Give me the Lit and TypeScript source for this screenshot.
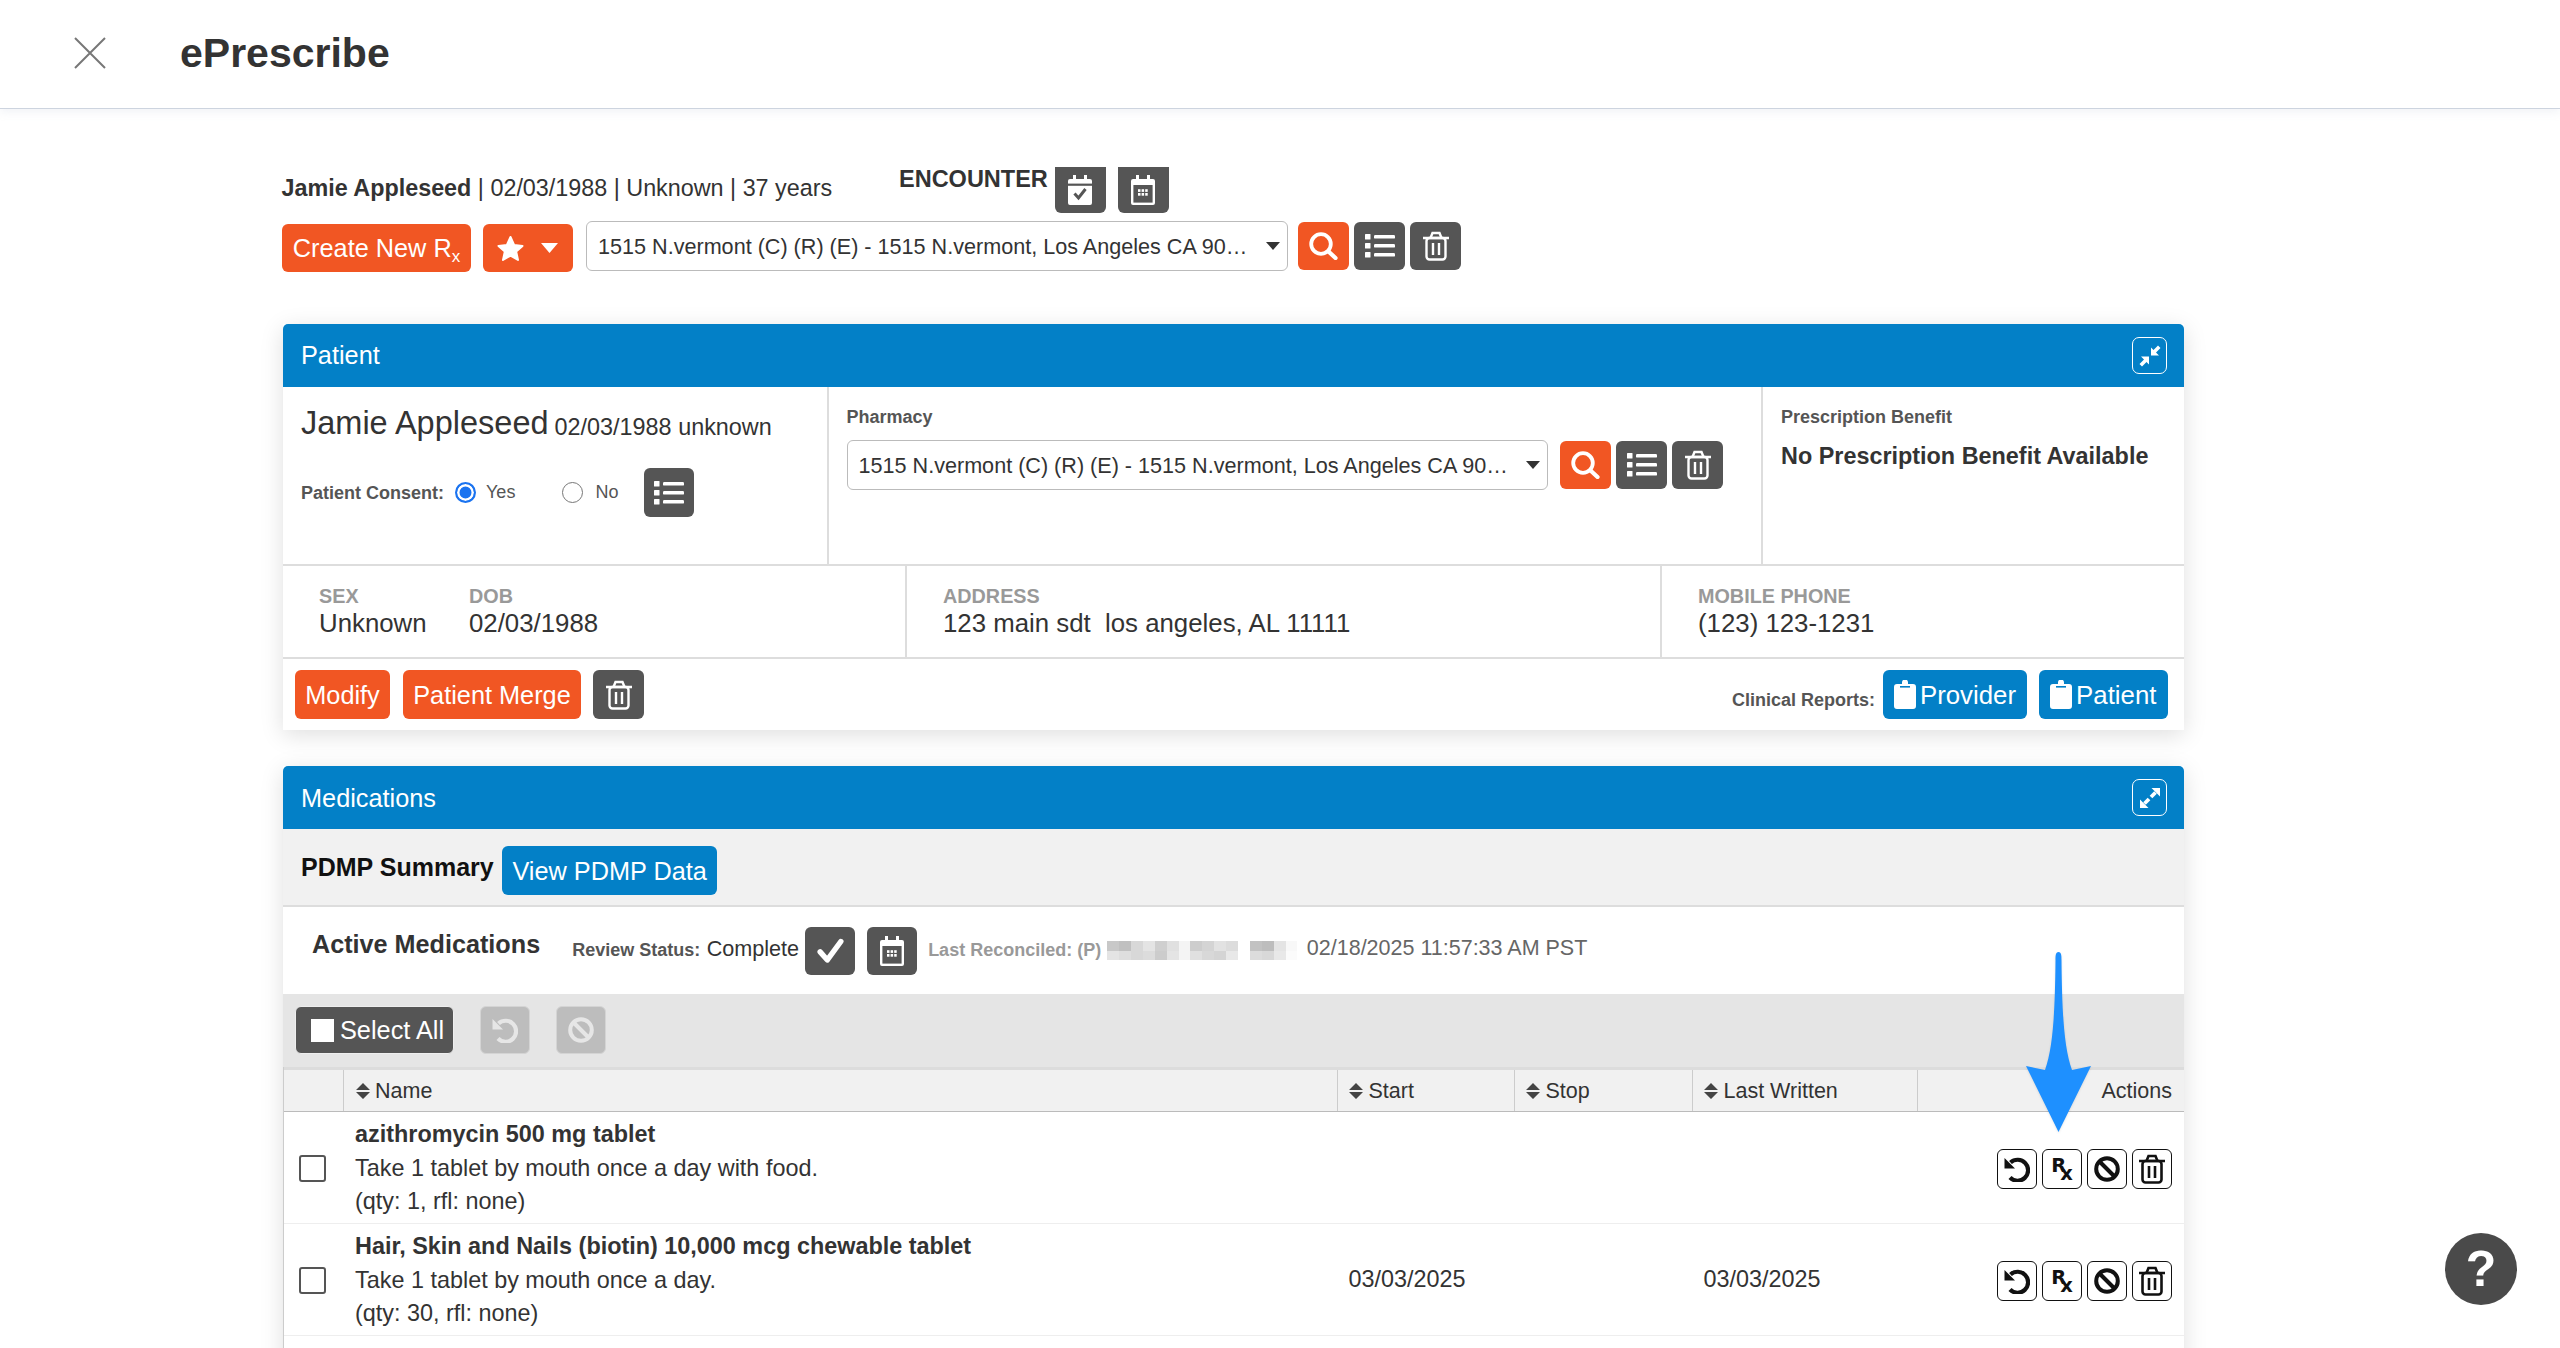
import { LitElement, html, css, svg } from "lit";
import { customElement } from "lit/decorators.js";

const trash = (c = "#fff", sw = 2.4) => html`<svg class="i-trash" viewBox="0 0 26 30" fill="none" stroke=${c} stroke-width=${sw}>
  <path d="M0.5 7H25.5" stroke-linecap="round"/><path d="M7.5 7L9.5 2H16.5L18.5 7"/>
  <rect x="3.5" y="7" width="19" height="21.5" rx="3"/><path d="M10 12V24M16 12V24" />
</svg>`;

const list = () => html`<svg class="i-list" viewBox="0 0 30 24" fill="#fff">
  <rect x="0" y="0" width="5.5" height="5.5" rx=".6"/><rect x="0" y="9" width="5.5" height="5.5" rx=".6"/><rect x="0" y="18" width="5.5" height="5.5" rx=".6"/>
  <rect x="9" y="1" width="21" height="3.6" rx="1.2"/><rect x="9" y="10" width="21" height="3.6" rx="1.2"/><rect x="9" y="19" width="21" height="3.6" rx="1.2"/>
</svg>`;

const search = () => html`<svg class="i-search" viewBox="0 0 29 28" fill="none" stroke="#fff">
  <circle cx="12" cy="12" r="9.8" stroke-width="3.8"/><path d="M19.5 19.5L26.5 26" stroke-width="4.2" stroke-linecap="round"/>
</svg>`;

const calDots = svg`<g fill="#fff">
  ${[0, 1, 2].map((c) => [0, 1].map((r) => svg`<rect x=${8 + c * 3.6} y=${14.2 + r * 3.8} width="2.5" height="2.7"/>`))}
</g>`;

const calendar = () => html`<svg class="i-cal" viewBox="0 0 26 30" fill="none">
  <path d="M6 0h3v4h8V0h3v4h3a2 2 0 0 1 2 2v22a2 2 0 0 1-2 2H3a2 2 0 0 1-2-2V6a2 2 0 0 1 2-2h3z" fill="#fff"/>
  <rect x="3.4" y="10" width="19.2" height="17.6" fill="#555"/>${calDots}
</svg>`;

const calCheck = () => html`<svg class="i-cal" viewBox="0 0 26 30" fill="none">
  <path d="M6 0h3v4h8V0h3v4h3a2 2 0 0 1 2 2v22a2 2 0 0 1-2 2H3a2 2 0 0 1-2-2V6a2 2 0 0 1 2-2h3z" fill="#fff"/>
  <rect x="0" y="8.6" width="26" height="2.2" fill="#555"/>
  <path d="M7.5 18.5l4 4.5 7-9" stroke="#555" stroke-width="3"/>
</svg>`;

const check = () => html`<svg class="i-check" viewBox="0 0 30 30" fill="none" stroke="#fff" stroke-width="6" stroke-linecap="round" stroke-linejoin="round"><path d="M3.5 16.5L11.5 25.5L26.5 5"/></svg>`;

const undo = (c: string) => html`<svg class="i-ico" viewBox="0 0 26 26" fill="none" stroke=${c}>
  <path d="M6.5 6.5A10.5 10.5 0 1 1 6 21.5" stroke-width="4.2"/><path d="M.5 2V12.5H11z" fill=${c} stroke="none"/>
</svg>`;

const ban = (c: string) => html`<svg class="i-ico" viewBox="0 0 26 26" fill="none" stroke=${c} stroke-width="4">
  <circle cx="13" cy="13" r="10.8"/><path d="M5.5 5.5L20.5 20.5"/>
</svg>`;

const clip = () => html`<svg class="i-clip" viewBox="0 0 22 29" fill="#fff">
  <path d="M3 4h5V2.5a3 3 0 0 1 6 0V4h5a3 3 0 0 1 3 3v19a3 3 0 0 1-3 3H3a3 3 0 0 1-3-3V7a3 3 0 0 1 3-3z"/>
  <rect x="6" y="6" width="10" height="1.6" fill="#0380c7"/>
</svg>`;

const collapseIcon = html`<svg class="i-exp" viewBox="0 0 22 22" fill="#fff">
  <path d="M12 2.5V10.5H20L17 7.5L21.5 3L19 0.5L14.5 5z"/><path d="M10 19.5V11.5H2L5 14.5L.5 19L3 21.5L7.5 17z"/>
</svg>`;
const expandIcon = html`<svg class="i-exp" viewBox="0 0 22 22" fill="#fff" stroke="#fff">
  <path d="M12.5 1H21V9.5z" stroke="none"/><path d="M16.5 5.5L12 10" stroke-width="3.8"/>
  <path d="M1 12.5V21H9.5z" stroke="none"/><path d="M5.5 16.5L10 12" stroke-width="3.8"/>
</svg>`;

const sortIcon = html`<svg class="i-sort" viewBox="0 0 14 16" fill="#444"><path d="M7 0L14 7H0zM0 9H14L7 16z"/></svg>`;

const PHARMACY = "1515 N.vermont (C) (R) (E) - 1515 N.vermont, Los Angeles CA 90…";

const BLUR = [
  "#c8c8c8", "#c0c0c0", "#d8d8d8", "#e4e4e4", "#cfcfcf", "#e0e0e0", "#f4f4f4", "#cdcdcd", "#d4d4d4", "#e2e2e2", "#dcdcdc", "#fff", "#c2c2c2", "#bdbdbd", "#e4e4e4", "#f8f8f8",
  "#e4e4e4", "#dedede", "#d8d8d8", "#dcdcdc", "#cccccc", "#e4e4e4", "#f4f4f4", "#e0e0e0", "#d8d8d8", "#d4d4d4", "#e8e8e8", "#fff", "#dcdcdc", "#d8d8d8", "#e8e8e8", "#fbfbfb",
];

const MEDS = [
  { name: "azithromycin 500 mg tablet", sig: "Take 1 tablet by mouth once a day with food.", qty: "(qty: 1, rfl: none)", start: "", written: "" },
  { name: "Hair, Skin and Nails (biotin) 10,000 mcg chewable tablet", sig: "Take 1 tablet by mouth once a day.", qty: "(qty: 30, rfl: none)", start: "03/03/2025", written: "03/03/2025" },
];

@customElement("app-root")
export class AppRoot extends LitElement {
  static styles = css`
    :host { display: block; height: 1348px; overflow: hidden; position: relative; background: #fff;
      font-family: "Liberation Sans", Arial, sans-serif; color: #333; font-size: 23.4px; }
    * { box-sizing: border-box; }
    svg { display: block; flex: none; }
    .i-trash { width: 26px; height: 30px; }
    .i-list { width: 30px; height: 24px; }
    .i-search { width: 29px; height: 28px; }
    .i-cal { width: 26px; height: 30px; }
    .i-check { width: 27px; height: 27px; }
    .i-ico { width: 26px; height: 26px; }
    .i-clip { width: 22px; height: 29px; flex: none; }
    .i-exp { width: 22px; height: 22px; }
    .i-sort { width: 14px; height: 16px; }

    .top { height: 109px; border-bottom: 1px solid #cdd4df; box-shadow: 0 3px 8px rgba(200,208,222,.25);
      display: flex; align-items: center; padding: 0 0 2px 74px; }
    .top svg { width: 32px; height: 32px; }
    .top h1 { margin: 0 0 0 74px; font-size: 41px; font-weight: 700; color: #333; line-height: 48px; }

    main { padding: 55px 0 0 283px; width: 2184px; }
    .btn { display: flex; align-items: center; justify-content: center; flex: none; border-radius: 6px; color: #fff;
      font-size: 25.3px; line-height: 30px; white-space: nowrap; height: 48px; }
    .org { background: #f15623; }
    .drk { background: #555; }
    .blu { background: #0380c7; }
    .sq { width: 51px; }
    .rep { font-size: 25.8px; gap: 4px; }

    .line1 { display: flex; align-items: flex-start; height: 57px; }
    .who { width: 617.5px; margin: 10px 0 0 -1.5px; line-height: 28px; font-size: 23.35px; }
    .enc { font-weight: 700; font-size: 23.5px; line-height: 28px; color: #333; margin: 1px 7px 0 0; }
    .cal-top { margin-top: 3px; height: 46px; border-radius: 0 0 6px 6px; }
    .cal-top + .cal-top { margin-left: 12px; }
    .line2 { display: flex; align-items: flex-start; height: 103px; margin-left: -1px; }
    .rx-btn { width: 189px; margin-top: 3px; }
    .rx-btn sub { font-size: 17px; line-height: 0; vertical-align: -5px; }
    .fav { width: 90px; margin: 3px 13px 0 12px; gap: 16px; padding-right: 3px; }
    .star { width: 29px; height: 27px; }
    .caret-w { width: 17px; height: 10px; }
    .select { width: 701.5px; height: 50px; border: 1px solid #bbb; border-radius: 6px; display: flex; align-items: center;
      justify-content: space-between; padding: 0 7px 0 11px; font-size: 21.6px; color: #333; background: #fff; flex: none; white-space: nowrap; }
    .select span { padding-top: 2px; }
    .select svg { width: 14px; height: 8px; }
    .tools { display: flex; gap: 5px; align-items: flex-start; }
    .line2 .tools { margin: 1px 0 0 10.5px; }

    .panel { width: 1901px; background: #fff; box-shadow: 0 5px 22px rgba(0,0,0,.13); }
    .phead { height: 63px; background: #0380c7; border-radius: 5px 5px 0 0; display: flex; align-items: center; justify-content: space-between;
      padding: 0 17px 0 18px; color: #fff; font-size: 25.3px; }
    .meds .phead span { margin-top: 2px; }
    .toggle { width: 35px; height: 37px; border: 1.5px solid #fff; border-radius: 7px; display: flex; align-items: center; justify-content: center; }

    .r1 { display: grid; grid-template-columns: 546px 934px 1fr; height: 179px; border-bottom: 2px solid #ddd; }
    .c { border-right: 2px solid #ddd; }
    .c:last-child { border-right: 0; }
    .c1 { padding: 16px 0 0 18px; }
    .big { line-height: 40px; font-size: 32.5px; color: #333; white-space: nowrap; }
    .big small { font-size: 23.4px; margin-left: -3px; position: relative; top: 1px; }
    .consent { display: flex; align-items: center; margin-top: 22px; font-size: 18px; color: #555; height: 49px; }
    .lbl { font-weight: 700; font-size: 18px; color: #555; line-height: 22px; white-space: nowrap; }
    .radio { width: 21px; height: 21px; border-radius: 50%; border: 1.5px solid #777; flex: none; background: #fff; }
    .radio.on { border: 2px solid #1a73f0; background: #1a73f0; box-shadow: inset 0 0 0 2.5px #fff; }
    .opt { color: #555; }
    .c2 { padding: 19px 0 0 17.5px; }
    .phrow { display: flex; margin-top: 12px; align-items: flex-start; }
    .phrow .tools { margin: 1px 0 0 12px; }
    .c3 { padding: 19px 0 0 18px; }
    .nob { font-weight: 700; font-size: 23.4px; line-height: 30px; margin-top: 13px; color: #333; white-space: nowrap; }

    .r2 { display: grid; grid-template-columns: 624px 755px 1fr; height: 92.5px; border-bottom: 2px solid #ddd; }
    .r2 .c { display: flex; padding-top: 18px; }
    .fld .k { font-size: 19.8px; font-weight: 700; color: #999; line-height: 24px; }
    .fld .v { font-size: 25.8px; line-height: 28px; margin-top: 1px; color: #333; white-space: pre; }

    .r3 { display: flex; align-items: center; justify-content: space-between; height: 71.5px; padding: 1px 16.5px 0 12px; }
    .r3 .btn { height: 49px; }
    .grp { display: flex; align-items: center; }
    .clin { font-weight: 700; font-size: 18px; color: #555; margin: 11px 8px 0 0; }

    .meds { margin-top: 36px; }
    .pdmp { height: 78px; background: #f1f1f1; border-bottom: 2px solid #ddd; display: flex; align-items: center; padding: 6px 0 0 18px; }
    .pdmp b { font-size: 25px; color: #111; margin: 0 8.5px 5px 0; white-space: nowrap; }
    .pdmp .btn { width: 215px; height: 49px; margin-top: 1px; }
    .active { height: 87px; display: flex; align-items: center; padding-left: 29px; white-space: nowrap; }
    .active h2 { margin: 0 32px 14px 0; font-size: 25.2px; font-weight: 700; color: #333; line-height: 30px; }
    .active .lbl { margin-bottom: 2px; }
    .active .comp { font-size: 21.6px; margin: 0 6px 4px 6.5px; }
    .active .btn { width: 50px; }
    .active .btn + .btn { margin-left: 12px; }
    .active .lr { color: #999; margin-left: 11px; }
    .blur { display: grid; grid-template-columns: repeat(16, 11.9px); grid-auto-rows: 9.5px; width: 190.4px; margin: 0 9.3px 0 6px; }
    .date { font-size: 21.5px; color: #666; margin-bottom: 5px; }

    .bar { height: 73px; background: #e5e5e5; display: flex; align-items: center; padding: 0 0 1px 12px; }
    .sel { width: 159px; border: 1px solid #eee; gap: 6px; font-size: 25.3px; justify-content: flex-start; padding-left: 15px; }
    .sel i { width: 23px; height: 23px; background: #fff; display: block; }
    .dis { width: 50px; background: #bdbdbd; border: 1px solid #d4d4d4; margin-left: 26px; }

    .tbl { border-left: 1.5px solid #ccc; }
    .row { display: grid; grid-template-columns: 60px 993.5px 177px 178px 225px 1fr; }
    .hd { height: 45px; background: #f1f1f1; border-top: 3px solid #dcdcdc; border-bottom: 1.5px solid #bbb; font-size: 21.5px; color: #333; }
    .hd > div { display: flex; align-items: center; gap: 5.5px; padding: 1px 0 0 11.5px; border-right: 1px solid #ccc; height: 100%; }
    .hd > div:first-child { padding: 0; }
    .hd > div:last-child { border: 0; justify-content: flex-end; padding-right: 12px; }
    .bd { height: 112px; border-bottom: 1.5px solid #eee; align-items: center; line-height: 33.5px; color: #333; }
    .bd > div { padding-left: 11px; }
    .bd > .ck { padding-left: 15px; margin-top: 2px; }
    .ck i { display: block; width: 27px; height: 27px; border: 2px solid #555; border-radius: 3px; }
    .nm { padding-top: 2px; }
    .nm b { color: #333; display: block; }
    .acts { display: flex; justify-content: flex-end; gap: 5px; padding-right: 12px; margin-top: 3px; }
    .act { width: 40px; height: 40px; border: 1.5px solid #111; border-radius: 6px; display: flex; align-items: center; justify-content: center; background: #fff; }
    .rxi { font-family: "DejaVu Sans", sans-serif; font-weight: 700; color: #111; display: flex; align-items: flex-start; font-size: 19.5px; line-height: 20px; margin: 1px 0 0 0; }
    .rxi span:first-child { letter-spacing: -6px; }
    .rxi span:last-child { margin-top: 8px; }

    .arrow { position: absolute; left: 2026px; top: 952px; width: 65px; height: 180px; filter: drop-shadow(0 1px 1px rgba(0,0,0,.1)); }
    .help { position: absolute; left: 2445px; top: 1233px; width: 72px; height: 72px; border-radius: 50%; background: #4a4a4a; color: #fff;
      font-weight: 700; font-size: 50px; line-height: 72px; text-align: center; }
  `;

  render() {
    return html`
      <header class="top">
        <svg viewBox="0 0 32 32" stroke="#777" stroke-width="2" fill="none"><path d="M1 1L31 31M31 1L1 31"/></svg>
        <h1>ePrescribe</h1>
      </header>
      <main>
        <div class="line1">
          <div class="who"><b>Jamie Appleseed</b> | 02/03/1988 | Unknown | 37 years</div>
          <div class="enc">ENCOUNTER</div>
          <div class="btn drk sq cal-top">${calCheck()}</div>
          <div class="btn drk sq cal-top">${calendar()}</div>
        </div>
        <div class="line2">
          <div class="btn org rx-btn"><span>Create New R<sub>x</sub></span></div>
          <div class="btn org fav">
            <svg class="star" viewBox="0 0 29 27" fill="#fff" stroke="#fff" stroke-width="2" stroke-linejoin="round"><path d="M14.5 2l3.6 8 8.4.9-6.3 5.7 1.8 8.4-7.5-4.4L7 25l1.8-8.4-6.3-5.7 8.4-.9z"/></svg>
            <svg class="caret-w" viewBox="0 0 17 10" fill="#fff"><path d="M0 0H17L8.5 10z"/></svg>
          </div>
          <div class="select"><span>${PHARMACY}</span><svg viewBox="0 0 14 8" fill="#333"><path d="M0 0H14L7 8z"/></svg></div>
          <div class="tools">
            <div class="btn org sq">${search()}</div>
            <div class="btn drk sq">${list()}</div>
            <div class="btn drk sq">${trash()}</div>
          </div>
        </div>

        <section class="panel">
          <div class="phead"><span>Patient</span><div class="toggle">${collapseIcon}</div></div>
          <div class="r1">
            <div class="c c1">
              <div class="big">Jamie Appleseed <small>02/03/1988 unknown</small></div>
              <div class="consent">
                <span class="lbl" style="margin-right:11px">Patient Consent:</span>
                <span class="radio on"></span><span class="opt" style="margin:0 47px 0 10px">Yes</span>
                <span class="radio"></span><span class="opt" style="margin:0 26px 0 12px">No</span>
                <div class="btn drk" style="width:50px;height:49px">${list()}</div>
              </div>
            </div>
            <div class="c c2">
              <div class="lbl">Pharmacy</div>
              <div class="phrow">
                <div class="select"><span>${PHARMACY}</span><svg viewBox="0 0 14 8" fill="#333"><path d="M0 0H14L7 8z"/></svg></div>
                <div class="tools">
                  <div class="btn org sq">${search()}</div>
                  <div class="btn drk sq">${list()}</div>
                  <div class="btn drk sq">${trash()}</div>
                </div>
              </div>
            </div>
            <div class="c c3">
              <div class="lbl">Prescription Benefit</div>
              <div class="nob">No Prescription Benefit Available</div>
            </div>
          </div>
          <div class="r2">
            <div class="c" style="padding-left:36px">
              <div class="fld" style="width:150px"><div class="k">SEX</div><div class="v">Unknown</div></div>
              <div class="fld"><div class="k">DOB</div><div class="v">02/03/1988</div></div>
            </div>
            <div class="c" style="padding-left:36px">
              <div class="fld"><div class="k">ADDRESS</div><div class="v">123 main sdt  los angeles, AL 11111</div></div>
            </div>
            <div class="c" style="padding-left:36px">
              <div class="fld"><div class="k">MOBILE PHONE</div><div class="v">(123) 123-1231</div></div>
            </div>
          </div>
          <div class="r3">
            <div class="grp">
              <div class="btn org" style="width:95px">Modify</div>
              <div class="btn org" style="width:178px;margin:0 12px 0 13px">Patient Merge</div>
              <div class="btn drk sq">${trash()}</div>
            </div>
            <div class="grp">
              <span class="clin">Clinical Reports:</span>
              <div class="btn blu rep" style="width:144px">${clip()}Provider</div>
              <div class="btn blu rep" style="width:128.5px;margin-left:12px">${clip()}Patient</div>
            </div>
          </div>
        </section>

        <section class="panel meds">
          <div class="phead"><span>Medications</span><div class="toggle">${expandIcon}</div></div>
          <div class="pdmp"><b>PDMP Summary</b><div class="btn blu">View PDMP Data</div></div>
          <div class="active">
            <h2>Active Medications</h2>
            <span class="lbl">Review Status:</span><span class="comp">Complete</span>
            <div class="btn drk">${check()}</div>
            <div class="btn drk">${calendar()}</div>
            <span class="lbl lr">Last Reconciled: (P)</span>
            <div class="blur">${BLUR.map((c) => html`<span style="background:${c}"></span>`)}</div>
            <span class="date">02/18/2025 11:57:33 AM PST</span>
          </div>
          <div class="bar">
            <div class="btn drk sel"><i></i>Select All</div>
            <div class="btn dis">${undo("#e6e6e6")}</div>
            <div class="btn dis">${ban("#e6e6e6")}</div>
          </div>
          <div class="tbl">
            <div class="row hd">
              <div></div>
              <div>${sortIcon}Name</div>
              <div>${sortIcon}Start</div>
              <div>${sortIcon}Stop</div>
              <div>${sortIcon}Last Written</div>
              <div>Actions</div>
            </div>
            ${MEDS.map((m) => html`
              <div class="row bd">
                <div class="ck"><i></i></div>
                <div class="nm"><b>${m.name}</b>${m.sig}<br />${m.qty}</div>
                <div>${m.start}</div>
                <div></div>
                <div>${m.written}</div>
                <div class="acts">
                  <div class="act">${undo("#111")}</div>
                  <div class="act"><span class="rxi"><span>R</span><span>x</span></span></div>
                  <div class="act">${ban("#111")}</div>
                  <div class="act">${trash("#111", 2.6)}</div>
                </div>
              </div>`)}
            <div style="height:40px"></div>
          </div>
        </section>
      </main>
      <svg class="arrow" viewBox="0 0 65 180" fill="#1e90ff"><path d="M32.5 0C35.5 0 35.5 4 35.5 8C36 60 38 96 46 118L65 114L32.5 180L0 114L19 118C27 96 29 60 29.5 8C29.5 4 29.5 0 32.5 0z"/></svg>
      <div class="help">?</div>
    `;
  }
}
